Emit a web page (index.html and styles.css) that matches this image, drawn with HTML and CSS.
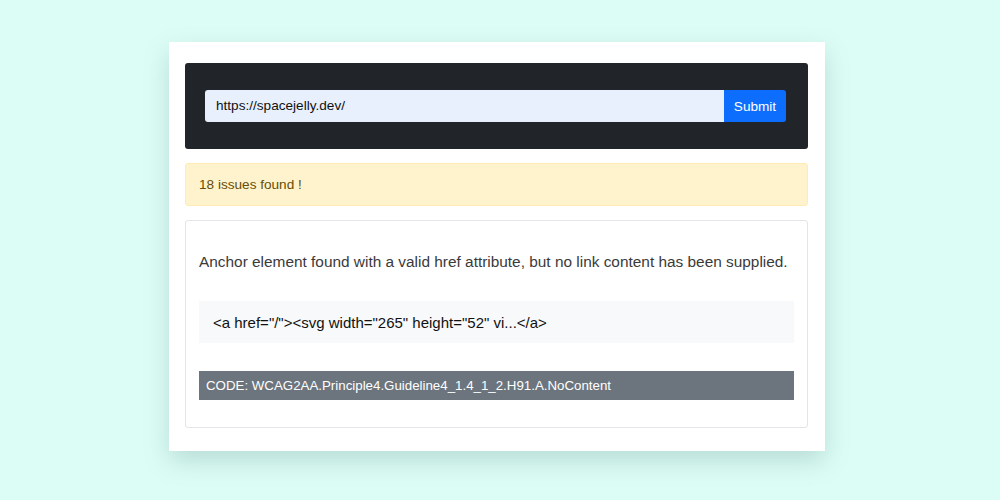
FILE: index.html
```html
<!DOCTYPE html>
<html>
<head>
<meta charset="utf-8">
<link rel="stylesheet" href="styles.css">
</head>
<body>
<main class="panel">
  <form class="search">
    <div class="input-group">
      <div class="input">https://spacejelly.dev/</div>
      <button class="submit" type="button">Submit</button>
    </div>
  </form>
  <div class="alert">18 issues found !</div>
  <div class="card">
    <p class="message">Anchor element found with a valid href attribute, but no link content has been supplied.</p>
    <div class="context">&lt;a href="/"&gt;&lt;svg width="265" height="52" vi...&lt;/a&gt;</div>
    <div class="code">CODE: WCAG2AA.Principle4.Guideline4_1.4_1_2.H91.A.NoContent</div>
  </div>
</main>
</body>
</html>
```

FILE: styles.css
```css
html, body {
  margin: 0;
  padding: 0;
}
body {
  background: #dcfdf6;
  width: 1000px;
  height: 500px;
  overflow: hidden;
  font-family: "Liberation Sans", Arial, sans-serif;
  padding-top: 42px;
  box-sizing: border-box;
}
.panel {
  width: 656px;
  margin-left: 169px;
  background: #fff;
  box-sizing: border-box;
  padding: 21px 17px 23px 16px;
  box-shadow: 0 10px 24px rgba(60, 110, 100, 0.22);
  height: 409px;
}
.search {
  background: #212529;
  border-radius: 3px;
  padding: 27px 22px 27px 20px;
  margin: 0;
}
.input-group {
  display: flex;
  height: 32px;
}
.input {
  flex: 1;
  background: #e8f0fe;
  border-radius: 3px 0 0 3px;
  color: #111;
  font-size: 13.6px;
  line-height: 32px;
  padding-left: 11px;
}
.submit {
  width: 62px;
  border: none;
  background: #0d6efd;
  color: #fff;
  font-family: inherit;
  font-size: 13.6px;
  border-radius: 0 3px 3px 0;
  padding: 0;
}
.alert {
  margin-top: 14px;
  height: 43px;
  box-sizing: border-box;
  background: #fff3cd;
  border: 1px solid #ffecb5;
  border-radius: 3px;
  color: #664d03;
  font-size: 13.6px;
  line-height: 41px;
  padding-left: 13px;
}
.card {
  margin-top: 14px;
  border: 1.5px solid #e3e5e8;
  border-radius: 3px;
  padding: 27px 13px 27px 13px;
  height: 208px;
  box-sizing: border-box;
}
.message {
  margin: 0;
  color: #3a3a3a;
  font-size: 15.4px;
  line-height: 28px;
  white-space: nowrap;
}
.context {
  margin-top: 25px;
  background: #f8f9fa;
  height: 42px;
  line-height: 44px;
  font-size: 15px;
  color: #111;
  padding-left: 14px;
}
.code {
  margin-top: 28px;
  background: #6c757d;
  color: #fff;
  height: 29px;
  line-height: 29px;
  font-size: 13.3px;
  padding-left: 7px;
}
```
